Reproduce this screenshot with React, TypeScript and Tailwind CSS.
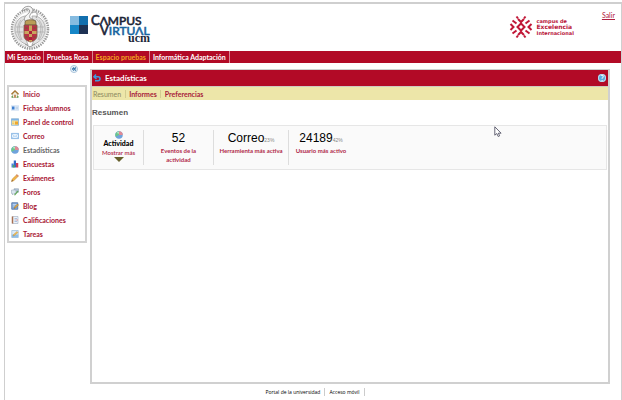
import type { ReactNode } from "react";

interface MenuItem {
  label: string;
  icon: ReactNode;
  active?: boolean;
}

interface Stat {
  value: string;
  percent?: string;
  label: string;
  width: string;
}

const tabs = [
  { label: "Mi Espacio" },
  { label: "Pruebas Rosa" },
  { label: "Espacio pruebas", active: true },
  { label: "Informática Adaptación" },
];

const stats: Stat[] = [
  { value: "52", label: "Eventos de la actividad", width: "w-[70px] px-3" },
  { value: "Correo", percent: "23%", label: "Herramienta más activa", width: "w-[75px]" },
  { value: "24189", percent: "42%", label: "Usuario más activo", width: "w-16" },
];

function Pie({ className }: { className: string }) {
  return (
    <svg viewBox="0 0 16 16" className={className} aria-hidden="true">
      <circle cx="8" cy="8" r="7.5" fill="#6fa3dc" />
      <path d="M8 8V.5A7.5 7.5 0 0 0 1.5 11.5Z" fill="#6cc58c" />
      <path d="M8 8V.5A7.5 7.5 0 0 1 15.5 8Z" fill="#e08a94" />
      <path d="M3 4a6 6 0 0 1 5-2.500v4z" fill="#b7e6c4" />
    </svg>
  );
}

function Icon({ children }: { children: ReactNode }) {
  return (
    <svg viewBox="0 0 16 16" className="size-2 shrink-0" aria-hidden="true">
      {children}
    </svg>
  );
}

const menu: MenuItem[] = [
  {
    label: "Inicio",
    icon: (
      <Icon>
        <path d="M3 8v7h10V8L8 3Z" fill="#f3efdf" stroke="#8b8a68" />
        <path d="M.8 8.500 8 1.500l7.200 7" fill="none" stroke="#a5722b" strokeWidth="2.200" />
        <path d="M6.500 9.500h3V15h-3z" fill="#b5763a" />
        <path d="M1 12h3v3.500H1zM12 12h3v3.500h-3z" fill="#6ea557" />
      </Icon>
    ),
  },
  {
    label: "Fichas alumnos",
    icon: (
      <Icon>
        <path d="M.5 3.500h15v9H.5z" fill="#e4effa" stroke="#b5cde8" />
        <path d="M2 5h5v6H2z" fill="#3f7fd0" />
        <path d="M9 6.500h5M9 9.500h5" stroke="#8ba9cf" />
      </Icon>
    ),
  },
  {
    label: "Panel de control",
    icon: (
      <Icon>
        <path d="M.8 1.500h14.400v13H.8z" fill="#f9e6a0" stroke="#70a6d8" strokeWidth="1.500" />
        <path d="M1 2h14v3H1z" fill="#7db3e6" />
        <path d="M8 7h6v6H8z" fill="#f0a72d" />
        <path d="M2.500 8h4M2.500 11h4" stroke="#d6a840" />
      </Icon>
    ),
  },
  {
    label: "Correo",
    icon: (
      <Icon>
        <path d="M.8 2.800h14.400v10.400H.8z" fill="#e8f3fd" stroke="#6fa5dc" strokeWidth="1.500" />
        <path d="m1.500 3.500 6.500 6 6.500-6M1.500 12.500l4.500-4M14.500 12.500l-4.500-4" fill="none" stroke="#8db8e4" />
      </Icon>
    ),
  },
  { label: "Estadísticas", icon: <Pie className="size-2 shrink-0" />, active: true },
  {
    label: "Encuestas",
    icon: (
      <Icon>
        <path d="M1 7h4.500v8H1z" fill="#4f86d9" />
        <path d="M5.500 1H10v14H5.500z" fill="#3568c5" />
        <path d="M10 6h4.500v9H10z" fill="#cf3e56" />
        <path d="M3.500 10H7v5H3.500z" fill="#52a85f" />
      </Icon>
    ),
  },
  {
    label: "Exámenes",
    icon: (
      <Icon>
        <path d="m1 15 1.500-5L12 1l3 3-9.500 9.500Z" fill="#f0b548" stroke="#c78229" />
        <path d="m12 1 3 3-2 2-3-3Z" fill="#d98b70" />
        <path d="m1 15 1-3 2 2Z" fill="#5b4a34" />
      </Icon>
    ),
  },
  {
    label: "Foros",
    icon: (
      <Icon>
        <path d="M6 1.500h9v7H9l-3 2Z" fill="#b5c7dc" stroke="#8394a8" />
        <path d="M1 4h9v7H6l-3 3v-3H1z" fill="#dae6ef" stroke="#8c9cae" />
        <path d="m6 14 7-9 2 2-7 8Z" fill="#63a95b" />
      </Icon>
    ),
  },
  {
    label: "Blog",
    icon: (
      <Icon>
        <path d="M1.500 1.500h12v13h-12z" fill="#86addc" stroke="#44689d" strokeWidth="1.500" />
        <path d="M3.500 5h8M3.500 8h5" stroke="#eef5fd" />
        <path d="m6 13 1-3 6-6 2 2-6 6Z" fill="#eeb348" stroke="#8f6529" />
      </Icon>
    ),
  },
  {
    label: "Calificaciones",
    icon: (
      <Icon>
        <path d="M3 1h11v14H3z" fill="#edf3fa" stroke="#8d9bb0" />
        <path d="M1.500 1h3v14h-3z" fill="#a66f52" />
        <path d="M7 5h5M7 8h3M7 11h5" stroke="#688fc2" />
        <path d="M11 7h2v2h-2z" fill="#d94d4d" />
      </Icon>
    ),
  },
  {
    label: "Tareas",
    icon: (
      <Icon>
        <path d="M1.500 1h13v14h-13z" fill="#dcebf8" stroke="#78a0c8" />
        <path d="M1.500 9h13v6h-13z" fill="#8fbde6" />
        <path d="m4 12 1-3 7-6 2 2-7 6Z" fill="#f1bd55" stroke="#b18334" strokeWidth=".7" />
      </Icon>
    ),
  },
];

function Crest() {
  return (
    <svg viewBox="0 0 40 48" className="h-12 w-10" role="img" aria-label="Universidad Complutense">
      <ellipse cx="20" cy="25" rx="18" ry="19.500" fill="none" stroke="#9a9a9a" strokeWidth="2.500" strokeDasharray="1.400 1" />
      <ellipse cx="20" cy="25" rx="16" ry="17.500" fill="#fff" stroke="#bbb" strokeWidth=".5" />
      <path d="M18 12C10 11 4 18 5 27c1 7 6 12 13 14l-3-8Z" fill="#e2e2e2" stroke="#999" strokeWidth=".7" />
      <path d="M22 12c8-1 14 6 13 15-1 7-6 12-13 14l3-8Z" fill="#e2e2e2" stroke="#999" strokeWidth=".7" />
      <path d="M14 15C8 19 8 27 12 36M11 16c-5 6-4 14 0 20M26 15c6 4 6 12 2 21M29 16c5 6 4 14 0 20M6 23h7M6 28h7M27 23h7M27 28h7" fill="none" stroke="#aaa" strokeWidth=".7" />
      <path d="M15 17c-2-4 2-6 4-8 2-3-1-5-3-4l-4 2c1-5 8-6 10-3 3 4-4 6-2 10l6 3Z" fill="#f4f4f4" stroke="#888" strokeWidth=".8" />
      <path d="M22 9c4-3 7 1 4 5" fill="none" stroke="#999" />
      <path d="M15 18c0-3 11-3 11 0v3H15Z" fill="#b99c57" stroke="#685538" strokeWidth=".7" />
      <path d="M14 21h13v11c0 3-3 5-6.500 6-3.500-1-6.500-3-6.500-6Z" fill="#bb2f46" stroke="#77604a" strokeWidth=".8" />
      <path d="M19 21.500h3v16h-3zM14.500 27h12v3h-12z" fill="#c8a65c" />
      <path d="M19 27h3v3h-3zM19 33h3v3h-3z" fill="#aa2039" />
      <path d="M15.500 23h2v2h-2zM23.500 23h2v2h-2zM15.500 32h2v2h-2zM23.500 32h2v2h-2z" fill="#8b4b39" />
      <path d="m15 40 5 3 5-3" fill="none" stroke="#999" />
    </svg>
  );
}

function CampusVirtualLogo() {
  return (
    <svg viewBox="0 0 84 32" className="h-8 w-[84px] overflow-visible" role="img" aria-label="Campus Virtual UCM">
      <path d="M0 1h9v9H0z" fill="#85bbe0" />
      <path d="M9 1h9v9H9z" fill="#126fae" />
      <path d="M0 10h9v9H0z" fill="#1686c7" />
      <path d="M9 10h9v9H9z" fill="#1d3254" />
      <g fill="#1a2336" stroke="#1a2336" strokeWidth=".6" fontFamily="Lato, sans-serif" fontSize="12">
        <text x="21" y="10">
          <tspan fontSize="13">C</tspan>ΛMPUS
        </text>
        <text x="30" y="20">
          <tspan fontSize="13">V</tspan>
          <tspan fill="#1865a0" stroke="#1865a0">IRTUΛL</tspan>
        </text>
      </g>
      <text x="58" y="27" fontSize="12" fontWeight="700" fill="#20283a" fontFamily="Liberation Serif, serif">ucm</text>
    </svg>
  );
}

function ExcellenceMark() {
  return (
    <svg viewBox="0 0 24 24" className="size-6" fill="none" stroke="#c01636" strokeWidth="2" aria-hidden="true">
      <path d="m12 8.500 3.500 3.500-3.500 3.500L8.500 12Z" />
      <path d="m9 4 3 3 3-3M9 20l3-3 3 3M1.500 9l3 3-3 3M22.500 9l-3 3 3 3" />
      <path d="m3.500 5.500 4 3M20.500 5.500l-4 3M3.500 18.500l4-3M20.500 18.500l-4-3" />
      <path d="m7.500 1.500 1.500 2M16.500 1.500l-1.500 2M7.500 22.500l1.500-2M16.500 22.500l-1.500-2" />
    </svg>
  );
}

function Header() {
  return (
    <header className="flex h-[47px] items-start justify-between pr-[6px]">
      <div className="flex pl-[5px]">
        <Crest />
        <div className="pt-[11px] pl-5">
          <CampusVirtualLogo />
        </div>
      </div>
      <div className="flex">
        <div className="flex items-center gap-1 pt-[11px]">
          <ExcellenceMark />
          <p className="text-[6px] leading-[6px] font-bold text-[#b8143a] [font-family:'DejaVu_Sans',sans-serif]">
            <span className="block text-[5px]">campus de</span>
            <span className="block">Excelencia</span>
            <span className="block text-[5px]">Internacional</span>
          </p>
        </div>
        <a href="#salir" className="pt-[7px] pl-7 text-[7px] leading-2 text-[#b02040] underline">
          Salir
        </a>
      </div>
    </header>
  );
}

function Sidebar() {
  return (
    <aside className="w-20 shrink-0">
      <div className="flex h-[22px] justify-end pt-[2px] pr-[9px]">
        <button
          type="button"
          aria-label="Ocultar menú"
          className="size-2 rounded-full border border-[#a9c3da] bg-[#edf5fb]"
        >
          <svg viewBox="0 0 8 8" className="size-full" fill="none" stroke="#3474a8" strokeWidth="1.500" aria-hidden="true">
            <path d="M4 2 2 4l2 2M6.500 2l-2 2 2 2" />
          </svg>
        </button>
      </div>
      <nav className="border-2 border-[#d3d3d3] pl-[2px]">
        <ul>
          {menu.map((item) => (
            <li key={item.label}>
              <a
                href="#menu"
                className={`flex h-[14px] items-center gap-1 text-[7px] font-bold whitespace-nowrap ${
                  item.active ? "text-[#666666]" : "text-[#a81432]"
                }`}
              >
                {item.icon}
                {item.label}
              </a>
            </li>
          ))}
        </ul>
      </nav>
    </aside>
  );
}

function Summary() {
  return (
    <section className="mx-px flex border border-[#e6e6e6] bg-[#fafafa] py-1">
      <div className="flex w-[50px] flex-col items-center border-r border-[#dddddd] pt-px">
        <Pie className="size-2" />
        <h3 className="text-[7px] leading-[9px] font-black text-black">Actividad</h3>
        <button type="button" className="flex flex-col items-center text-[6px] leading-[9px] font-semibold text-[#b02848]">
          Mostrar más
          <svg viewBox="0 0 10 5" className="h-[5px] w-[10px]" aria-hidden="true">
            <path d="M0 0h10L5 5Z" fill="#66602c" />
          </svg>
        </button>
      </div>
      {stats.map((stat) => (
        <div key={stat.label} className={`${stat.width} border-r border-[#dddddd] pb-px text-center last:border-r-0`}>
          <p className="h-4 text-[12px] leading-4 text-black [font-family:'Liberation_Sans',sans-serif]">
            {stat.value}
            {stat.percent && <span className="text-[5px] leading-none text-[#888888]">{stat.percent}</span>}
          </p>
          <p className="text-[6px] leading-[9px] font-bold text-[#b02848]">{stat.label}</p>
        </div>
      ))}
    </section>
  );
}

export default function App() {
  return (
    <div className="relative flex min-h-screen flex-col bg-white pt-[2px] pl-1 [font-family:Lato,'Open_Sans',sans-serif]">
      <div className="flex flex-1 flex-col border-t-2 border-r border-l border-[#cfcfcf]">
        <Header />
        <nav className="flex h-3 items-center bg-[#b20a26] text-[7px] leading-3 font-bold">
          {tabs.map((tab) => (
            <a
              key={tab.label}
              href="#espacio"
              className={`border-r border-[#d98592] px-[3px] first:px-[2px] ${
                tab.active ? "text-[#f2a71e]" : "text-white"
              }`}
            >
              {tab.label}
            </a>
          ))}
        </nav>
        <div className="flex flex-1 gap-[3px] pr-[11px] pl-[2px]">
          <Sidebar />
          <main className="mt-[6px] flex min-w-0 flex-1 flex-col border-2 border-t border-[#d0d0d0]">
            <div className="flex h-4 items-center justify-between bg-[#b20a26] pr-[2px] pl-px">
              <div className="flex items-center gap-1">
                <button type="button" aria-label="Volver" className="size-2">
                  <svg viewBox="0 0 8 8" className="size-full" fill="none" stroke="#3f9ade" strokeWidth="1.500" aria-hidden="true">
                    <path d="M3 .5 1 2.800 3.500 5M1.500 2.800H5a2 2 0 0 1 0 4H2" />
                  </svg>
                </button>
                <h1 className="text-[8px] leading-3 font-bold text-white">Estadísticas</h1>
              </div>
              <button
                type="button"
                className="flex size-2 items-center justify-center rounded-full bg-[#58a9dc] text-[7px] leading-2 font-bold text-white ring-1 ring-[#c3dcec] ring-inset"
              >
                ?
              </button>
            </div>
            <nav className="flex h-[14px] items-center border-t border-[#cfc9c0] bg-[#ede6a9] text-[7px] leading-2">
              <span className="border-r border-[#d3cc90] px-px pr-1 text-[#8a8760]">Resumen</span>
              <a href="#informes" className="border-r border-[#d3cc90] px-[3px] font-bold text-[#a8203a]">
                Informes
              </a>
              <a href="#preferencias" className="px-1 font-bold text-[#a8203a]">
                Preferencias
              </a>
            </nav>
            <h2 className="pt-[9px] pb-2 text-[8px] leading-2 font-bold text-[#555555] [font-family:'Liberation_Sans',sans-serif]">
              Resumen
            </h2>
            <Summary />
          </main>
        </div>
        <footer className="flex h-4 items-center justify-center text-[5px] leading-2 text-black [font-family:'Open_Sans',sans-serif]">
          <a href="#portal" className="border-r border-[#cccccc] px-1">
            Portal de la universidad
          </a>
          <a href="#movil" className="border-r border-[#cccccc] px-1">
            Acceso móvil
          </a>
        </footer>
      </div>
      <svg viewBox="0 0 8 12" className="absolute top-[126px] left-[494px] h-3 w-2" aria-hidden="true">
        <path d="M.8.8v8.400l2-1.700L4.200 10.500l1.500-.7-1.400-2.600h2.800Z" fill="#fff" stroke="#555566" strokeWidth=".9" />
      </svg>
    </div>
  );
}
